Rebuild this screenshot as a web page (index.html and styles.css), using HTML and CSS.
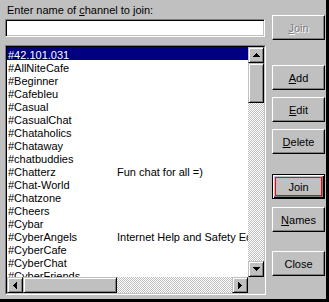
FILE: index.html
```html
<!doctype html>
<html>
<head>
<title>Join Channel</title>
<meta charset="UTF-8">
<link rel="stylesheet" href="styles.css">
</head>
<body>

  <div class="dialog">

    <div class="left">
      <label class="caption" for="channel">Enter name of <u>c</u>hannel to join:</label>
      <input id="channel" class="field" type="text">

      <div class="listbox">
        <div class="items">
          <div class="row selected"><span class="name">#42.101.031</span></div>
          <div class="row"><span class="name">#AllNiteCafe</span></div>
          <div class="row"><span class="name">#Beginner</span></div>
          <div class="row"><span class="name">#Cafebleu</span></div>
          <div class="row"><span class="name">#Casual</span></div>
          <div class="row"><span class="name">#CasualChat</span></div>
          <div class="row"><span class="name">#Chataholics</span></div>
          <div class="row"><span class="name">#Chataway</span></div>
          <div class="row"><span class="name">#chatbuddies</span></div>
          <div class="row"><span class="name">#Chatterz</span><span class="desc">Fun chat for all =)</span></div>
          <div class="row"><span class="name">#Chat-World</span></div>
          <div class="row"><span class="name">#Chatzone</span></div>
          <div class="row"><span class="name">#Cheers</span></div>
          <div class="row"><span class="name">#Cybar</span></div>
          <div class="row"><span class="name">#CyberAngels</span><span class="desc">Internet Help and Safety Education</span></div>
          <div class="row"><span class="name">#CyberCafe</span></div>
          <div class="row"><span class="name">#CyberChat</span></div>
          <div class="row"><span class="name">#CyberFriends</span></div>
        </div>

        <div class="vscroll">
          <div class="sbtn">
            <svg width="7" height="4" viewBox="0 0 7 4"><path d="M3 0h1v1H3z M2 1h3v1H2z M1 2h5v1H1z M0 3h7v1H0z"/></svg>
          </div>
          <div class="thumb v"></div>
          <div class="track"></div>
          <div class="sbtn">
            <svg width="7" height="4" viewBox="0 0 7 4"><path d="M0 0h7v1H0z M1 1h5v1H1z M2 2h3v1H2z M3 3h1v1H3z"/></svg>
          </div>
        </div>

        <div class="hscroll">
          <div class="sbtn">
            <svg width="4" height="7" viewBox="0 0 4 7"><path d="M3 0h1v7H3z M2 1h1v5H2z M1 2h1v3H1z M0 3h1v1H0z"/></svg>
          </div>
          <div class="thumb h"></div>
          <div class="track"></div>
          <div class="sbtn">
            <svg width="4" height="7" viewBox="0 0 4 7"><path d="M0 0h1v7H0z M1 1h1v5H1z M2 2h1v3H2z M3 3h1v1H3z"/></svg>
          </div>
        </div>

        <div class="corner"></div>
      </div>
    </div>

    <div class="right">
      <button class="btn disabled" id="join-top"><u>J</u>oin</button>
      <button class="btn" id="add"><u>A</u>dd</button>
      <button class="btn" id="edit"><u>E</u>dit</button>
      <button class="btn" id="delete"><u>D</u>elete</button>
      <button class="btn default" id="join">Join</button>
      <button class="btn" id="names"><u>N</u>ames</button>
      <button class="btn" id="close">Close</button>
    </div>

  </div>

</body>
</html>
```

FILE: styles.css
```css
html, body {
  margin: 0;
  padding: 0;
}

body {
  font-family: "Liberation Sans", Arial, sans-serif;
  font-size: 11px;
  color: #000;
  background: #c0c0c0;
}

u {
  text-underline-offset: 1px;
}

.dialog {
  box-sizing: border-box;
  width: 329px;
  height: 302px;
  display: flex;
  gap: 6px;
  padding: 0 1px 0 5px;
  border-right: 3px solid #000;
  border-bottom: 3px solid #000;
  background: #c0c0c0;
}

/* left side: caption, text field, channel list */
.left {
  width: 261px;
  display: flex;
  flex-direction: column;
}

.caption {
  display: block;
  margin-top: 4px;
  height: 13px;
  line-height: 13px;
  padding-left: 2px;
}

.field {
  box-sizing: border-box;
  margin: 2px 0 0 0;
  width: 260px;
  height: 18px;
  padding: 0;
  background: #fff;
  border: 1px solid;
  border-color: #808080 #fff #fff #808080;
  box-shadow: inset 1px 1px #000, inset -1px -1px #c0c0c0;
  outline: none;
}

.listbox {
  box-sizing: border-box;
  margin-top: 8px;
  height: 250px;
  display: grid;
  grid-template-columns: 1fr 16px;
  grid-template-rows: 1fr 16px;
  border: 2px solid;
  border-color: #808080 #fff #fff #808080;
  background: #fff;
  position: relative;
}
.listbox::before {
  content: '';
  position: absolute;
  inset: -1px;
  border: 1px solid;
  border-color: #000 #c0c0c0 #c0c0c0 #000;
  pointer-events: none;
}

.items {
  overflow: hidden;
  background: #fff;
}

.row {
  height: 13px;
  line-height: 16px;
  display: flex;
  white-space: nowrap;
  padding-left: 1px;
}
.row.selected {
  background: #000080;
  color: #fff;
}
.name {
  width: 109px;
  flex: none;
}

/* scroll bars */
.vscroll {
  display: flex;
  flex-direction: column;
}
.hscroll {
  display: flex;
}

.sbtn, .thumb {
  box-sizing: border-box;
  background: #c0c0c0;
  border: 1px solid;
  border-color: #c0c0c0 #000 #000 #c0c0c0;
  box-shadow: inset 1px 1px #fff, inset -1px -1px #808080;
}
.sbtn {
  width: 16px;
  height: 16px;
  flex: none;
  display: flex;
  align-items: center;
  justify-content: center;
}
.sbtn svg {
  display: block;
  shape-rendering: crispEdges;
}
.thumb.v {
  height: 40px;
  flex: none;
}
.thumb.h {
  width: 94px;
  flex: none;
}

.track {
  flex: 1;
  background-image: repeating-conic-gradient(#fff 0 25%, #c0c0c0 0 50%);
  background-size: 2px 2px;
}

.corner {
  background: #c0c0c0;
}

/* right side buttons */
.right {
  width: 53px;
  display: flex;
  flex-direction: column;
}

.btn {
  box-sizing: border-box;
  position: relative;
  width: 53px;
  height: 25px;
  margin: 0;
  padding: 1px 0 0 0;
  font-family: "Liberation Sans", Arial, sans-serif;
  font-size: 11px;
  color: #000;
  background: #c0c0c0;
  border: 1px solid;
  border-color: #fff #000 #000 #fff;
  box-shadow: inset -1px -1px #808080;
  -webkit-appearance: none;
  appearance: none;
  outline: none;
}

.btn.disabled {
  color: #808080;
  text-shadow: 1px 1px #fff;
}

.btn.default {
  border-color: #000;
  box-shadow: inset 1px 1px #fff, inset -1px -1px #000, inset -2px -2px #808080;
}
.btn.default::after {
  content: '';
  position: absolute;
  left: 2px; top: 2px; right: 2px; bottom: 2px;
  border: 1px solid #f00;
}

#join-top { margin-top: 15px; }
#add { margin-top: 25px; }
#edit { margin-top: 7px; }
#delete { margin-top: 7px; }
#join { margin-top: 20px; }
#names { margin-top: 8px; }
#close { margin-top: 19px; }
```
